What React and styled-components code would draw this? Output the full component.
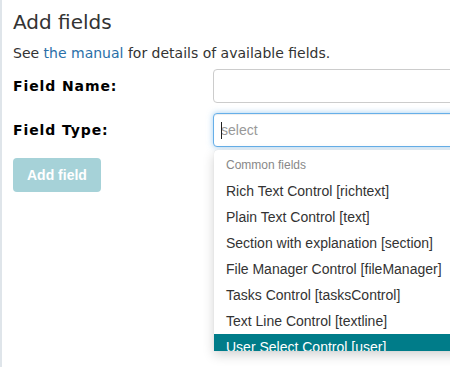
import React from 'react';
import styled, { createGlobalStyle } from 'styled-components';

const GlobalStyle = createGlobalStyle`
  html, body {
    margin: 0;
    padding: 0;
    background: #fff;
    overflow: hidden;
  }
`;

const StyledPage = styled.div`
  width: 450px;
  height: 367px;
  box-sizing: border-box;
  border-left: 2px solid #dfe5ea;
  padding: 9px 0 0 11px;
  overflow: hidden;
  font-family: Verdana, "DejaVu Sans", sans-serif;
  color: #333;
`;

const StyledTitle = styled.h2`
  margin: 0;
  font-size: 20px;
  font-weight: normal;
  line-height: 26px;
  color: #333;
`;

const StyledIntro = styled.p`
  margin: 8px 0 0;
  font-size: 14px;
  line-height: 20px;

  a {
    color: #2a6fa8;
    text-decoration: none;
  }
`;

const StyledRow = styled.div`
  display: grid;
  grid-template-columns: 200px 260px;
  align-items: center;
  margin-top: ${({ $gap }) => $gap}px;
`;

const StyledLabel = styled.label`
  font-size: 14px;
  font-weight: bold;
  letter-spacing: 0.9px;
  color: #000;
`;

const StyledFieldBox = styled.div`
  position: relative;
`;

const StyledInput = styled.input`
  box-sizing: border-box;
  width: 260px;
  height: 34px;
  padding: 0 7px;
  border: 1px solid ${({ $focus }) => ($focus ? '#66afe9' : '#ccc')};
  border-radius: 4px;
  font-family: "Liberation Sans", Arial, sans-serif;
  font-size: 14px;
  color: #555;
  outline: none;
  box-shadow: ${({ $focus }) =>
    $focus ? 'inset 0 1px 1px rgba(0,0,0,.075), 0 0 6px rgba(102,175,233,.6)' : 'none'};

  &::placeholder {
    color: #999;
  }
`;

const StyledCaret = styled.span`
  position: absolute;
  left: 8px;
  top: 9px;
  width: 1px;
  height: 17px;
  background: #222;
`;

const StyledMenu = styled.ul`
  position: absolute;
  left: 1px;
  top: 37px;
  width: 260px;
  height: 199px;
  margin: 0;
  padding: 2px 0 0;
  list-style: none;
  overflow: hidden;
  background: #fff;
  border-radius: 4px 0 0 0;
  box-shadow: 0 4px 12px rgba(0, 0, 0, 0.18), 0 0 1px rgba(0, 0, 0, 0.15);
  font-family: "Liberation Sans", Arial, sans-serif;
  z-index: 2;
`;

const StyledMenuHeader = styled.li`
  height: 26px;
  line-height: 26px;
  padding-left: 12px;
  font-size: 12px;
  color: #888;
`;

const StyledMenuItem = styled.li`
  height: 26px;
  line-height: 26px;
  padding-left: 12px;
  font-size: 14px;
  white-space: nowrap;
  color: ${({ $active }) => ($active ? '#fff' : '#333')};
  background: ${({ $active }) => ($active ? '#007c89' : 'transparent')};
`;

const StyledButton = styled.button`
  margin-top: 11px;
  height: 34px;
  padding: 0 14px;
  border: none;
  border-radius: 4px;
  background: #a6d2d8;
  color: #fff;
  font-family: "Liberation Sans", Arial, sans-serif;
  font-size: 14px;
  font-weight: bold;
`;

const fieldTypes = [
  'Rich Text Control [richtext]',
  'Plain Text Control [text]',
  'Section with explanation [section]',
  'File Manager Control [fileManager]',
  'Tasks Control [tasksControl]',
  'Text Line Control [textline]',
  'User Select Control [user]',
];

const App = () => {
  return (
    <>
      <GlobalStyle />
      <StyledPage>
        <StyledTitle>Add fields</StyledTitle>
        <StyledIntro>
          See <a href="#manual">the manual</a> for details of available fields.
        </StyledIntro>
        <StyledRow $gap={6}>
          <StyledLabel>Field Name:</StyledLabel>
          <StyledFieldBox>
            <StyledInput type="text" />
          </StyledFieldBox>
        </StyledRow>
        <StyledRow $gap={10}>
          <StyledLabel>Field Type:</StyledLabel>
          <StyledFieldBox>
            <StyledInput type="text" placeholder="select" $focus />
            <StyledCaret />
            <StyledMenu>
              <StyledMenuHeader>Common fields</StyledMenuHeader>
              {fieldTypes.map((type, i) => (
                <StyledMenuItem key={type} $active={i === fieldTypes.length - 1}>
                  {type}
                </StyledMenuItem>
              ))}
            </StyledMenu>
          </StyledFieldBox>
        </StyledRow>
        <StyledButton>Add field</StyledButton>
      </StyledPage>
    </>
  );
};

export default App;
